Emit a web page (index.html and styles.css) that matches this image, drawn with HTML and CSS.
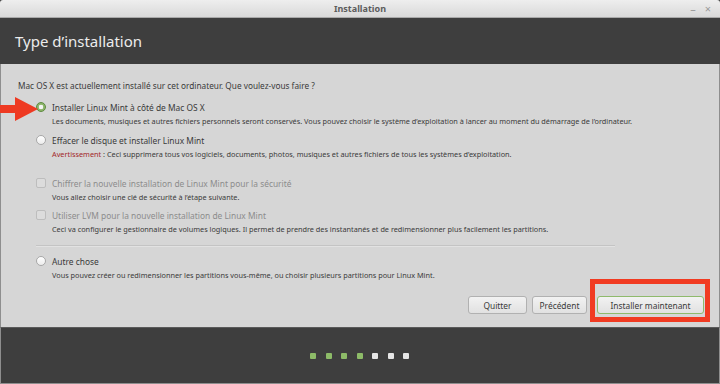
FILE: index.html
```html
<!DOCTYPE html>
<html lang="fr">
<head>
    <meta charset="UTF-8">
    <title>Installation</title>
    <link rel="stylesheet" href="styles.css">
</head>
<body>
<div class="window">
    <div class="titlebar">
        <span class="title">Installation</span>
        <div class="controls">
            <span class="ctl">&ndash;</span>
            <span class="ctl">&times;</span>
        </div>
    </div>
    <div class="header">
        <h1>Type d’installation</h1>
    </div>
    <div class="content">
        <p class="question">Mac OS X est actuellement installé sur cet ordinateur. Que voulez-vous faire ?</p>
        <div class="options">
            <div class="option first">
                <span class="radio checked"></span>
                <div class="text">
                    <div class="label">Installer Linux Mint à côté de Mac OS X</div>
                    <div class="desc">Les documents, musiques et autres fichiers personnels seront conservés. Vous pouvez choisir le système d’exploitation à lancer au moment du démarrage de l’ordinateur.</div>
                </div>
            </div>
            <div class="option second">
                <span class="radio"></span>
                <div class="text">
                    <div class="label">Effacer le disque et installer Linux Mint</div>
                    <div class="desc"><span class="warn">Avertissement</span> : Ceci supprimera tous vos logiciels, documents, photos, musiques et autres fichiers de tous les systèmes d’exploitation.</div>
                </div>
            </div>
            <div class="option third">
                <span class="check"></span>
                <div class="text">
                    <div class="label disabled">Chiffrer la nouvelle installation de Linux Mint pour la sécurité</div>
                    <div class="desc">Vous allez choisir une clé de sécurité à l’étape suivante.</div>
                </div>
            </div>
            <div class="option fourth">
                <span class="check"></span>
                <div class="text">
                    <div class="label disabled">Utiliser LVM pour la nouvelle installation de Linux Mint</div>
                    <div class="desc">Ceci va configurer le gestionnaire de volumes logiques. Il permet de prendre des instantanés et de redimensionner plus facilement les partitions.</div>
                </div>
            </div>
            <div class="separator"></div>
            <div class="option fifth">
                <span class="radio"></span>
                <div class="text">
                    <div class="label">Autre chose</div>
                    <div class="desc">Vous pouvez créer ou redimensionner les partitions vous-même, ou choisir plusieurs partitions pour Linux Mint.</div>
                </div>
            </div>
        </div>
        <div class="buttons">
            <button class="btn quit">Quitter</button>
            <button class="btn back">Précédent</button>
            <button class="btn install">Installer maintenant</button>
        </div>
    </div>
    <div class="footer">
        <span class="dot done"></span>
        <span class="dot done"></span>
        <span class="dot done"></span>
        <span class="dot done"></span>
        <span class="dot"></span>
        <span class="dot"></span>
        <span class="dot"></span>
    </div>

    <!-- annotations drawn over the screenshot -->
    <svg class="arrow" width="40" height="26" viewBox="0 0 40 26">
        <polygon points="0,8 15,8 15,0 38,12 15,24 15,16 0,16" fill="#ee3a22"/>
    </svg>
    <div class="highlight"></div>
</div>
</body>
</html>
```

FILE: styles.css
```css
body {
    margin: 0;
    background: #3d3d3d;
    font-family: "Noto Sans", "DejaVu Sans", sans-serif;
    color: #3a3a3a;
}
.window {
    position: relative;
    width: 720px;
    height: 384px;
    display: flex;
    flex-direction: column;
    overflow: hidden;
}
.titlebar {
    height: 17px;
    border-bottom: 1px solid #a9a9a9;
    border-radius: 3px 3px 0 0;
    background: linear-gradient(#eeeeee, #d9d9d9);
    display: flex;
    align-items: center;
    justify-content: center;
    position: relative;
}
.title {
    font-size: 9px;
    font-weight: bold;
    color: #5c5c5c;
}
.controls {
    position: absolute;
    right: 9px;
    top: 1px;
    display: flex;
    gap: 9px;
}
.ctl {
    font-size: 11px;
    color: #9a9a9a;
    line-height: 15px;
}
.header {
    height: 46px;
    background: #3e3e3e;
    display: flex;
    align-items: center;
    padding-left: 15px;
}
.header h1 {
    margin: 0;
    font-size: 15px;
    font-weight: normal;
    color: #ececec;
}
.content {
    flex: 1;
    background: #d6d6d6;
    border-left: 1px solid #8e8e8e;
    border-right: 1px solid #8e8e8e;
    padding: 15px 15px 0 17px;
}
.question {
    margin: 0;
    font-size: 8.25px;
    line-height: 14px;
}
.options {
    padding-left: 18px;
    margin-top: 7px;
}
.option {
    display: flex;
    gap: 6px;
}
.option.second { margin-top: 5px; }
.option.third { margin-top: 15px; }
.option.fourth { margin-top: 4px; }
.option.fifth { margin-top: 8px; }
.label {
    font-size: 8.4px;
    line-height: 15px;
}
.label.disabled { color: #8c8c8c; }
.desc {
    font-size: 7.3px;
    line-height: 13px;
}
.warn { color: #a3282a; }
.radio, .check {
    flex: none;
    width: 10px;
    height: 10px;
    margin-top: 2px;
    box-sizing: border-box;
}
.radio {
    border-radius: 50%;
    border: 1px solid #a8a8a8;
    background: linear-gradient(#ffffff, #ececec);
}
.radio.checked {
    border-color: #5d8a3f;
    background: radial-gradient(circle, #f4f4f4 0, #f4f4f4 2px, #8cb56a 2.6px);
}
.check {
    border: 1px solid #bdbdbd;
    border-radius: 2px;
    background: #dcdcdc;
}
.separator {
    width: 579px;
    height: 1px;
    background: #c4c4c4;
    margin-top: 9px;
    box-shadow: 0 1px 0 #e2e2e2;
}
.buttons {
    display: flex;
    justify-content: flex-end;
    margin-top: 14px;
}
.btn {
    height: 18px;
    padding: 0;
    font-family: inherit;
    font-size: 8.4px;
    color: #3a3a3a;
    border: 1px solid #b1b1b1;
    border-radius: 3px;
    background: linear-gradient(#f2f2f2, #e1e1e1);
}
.quit { width: 59px; }
.back { width: 55px; margin-left: 5px; }
.install {
    width: 107px;
    margin-left: 10px;
    border-color: #8fba6c;
}
.footer {
    height: 55px;
    background: #3e3e3e;
    border: 1px solid #8e8e8e;
    border-top: 1px solid #5a5a5a;
    display: flex;
    justify-content: center;
    align-items: center;
    gap: 9.5px;
    padding-right: 1px;
}
.dot {
    width: 6px;
    height: 6px;
    border-radius: 1px;
    background: #e6e6e6;
}
.dot.done { background: #8dbb68; }
.arrow {
    position: absolute;
    left: 0;
    top: 97px;
}
.highlight {
    position: absolute;
    left: 590px;
    top: 279px;
    width: 120px;
    height: 43px;
    box-sizing: border-box;
    border: 5px solid #f13b22;
}
```
